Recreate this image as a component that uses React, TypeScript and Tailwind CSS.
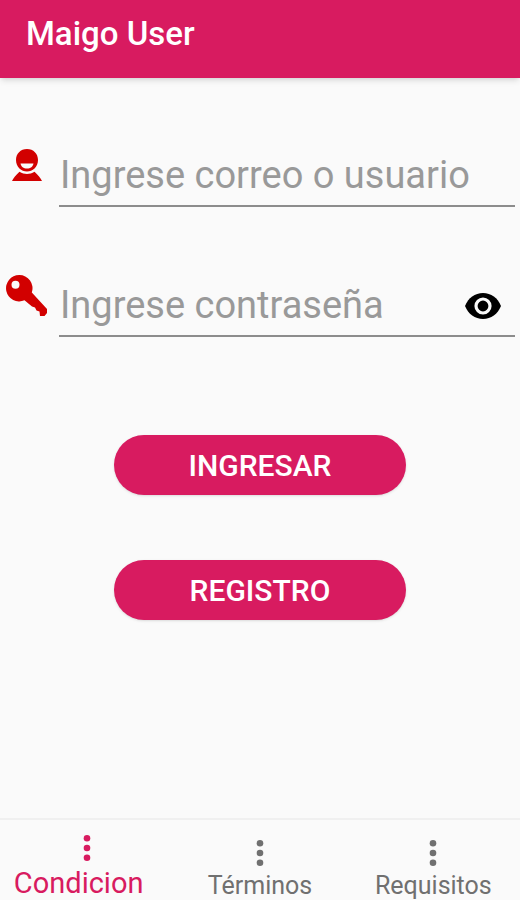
import { useState } from "react";
import clsx from "clsx";

const tabs = ["Condicion", "Términos", "Requisitos"];

function UserIcon() {
    return (
        <svg viewBox="0 0 30 32" className="h-8 w-[30px] fill-[#d20000]" aria-hidden="true">
            <path
                fillRule="evenodd"
                d="M15 0C21.500 0 26 4.700 26 11C26 18 20.500 22.500 15 22.500S4 18 4 11C4 4.700 8.500 0 15 0ZM8.500 14.500C9 17.500 11.500 19.500 15 19.500S21 17.500 21.500 14.500Z"
            />
            <path d="M0 32C1.500 29 3.800 26.200 7.500 22.800C10 24.400 12.400 25 15 25S20 24.400 22.500 22.800C26.200 26.200 28.500 29 30 32Z" />
        </svg>
    );
}

function KeyIcon() {
    return (
        <svg viewBox="0 0 42 42" className="h-[42px] w-[42px] fill-[#d20000]" aria-hidden="true">
            <path
                fillRule="evenodd"
                d="M13.200 0A13.200 13.200 0 0 1 25.800 17.500L41 34V38L38.500 41H34L33.500 36.500L30.500 35.500L29 32.500L26 31.500L18.500 25.300A13.200 13.200 0 1 1 13.200 0ZM9.500 5.700A4 4 0 1 0 9.500 13.700A4 4 0 1 0 9.500 5.700Z"
            />
        </svg>
    );
}

function EyeIcon() {
    return (
        <svg viewBox="0 0 36 26" className="h-[26px] w-9" aria-hidden="true">
            <path d="M0 13C3.200 5 10 0 18 0S32.800 5 36 13C32.800 21 26 26 18 26S3.200 21 0 13Z" />
            <circle cx="18" cy="13" r="7" fill="none" stroke="#fafafa" strokeWidth="3.200" />
        </svg>
    );
}

function DotsIcon() {
    return (
        <svg viewBox="0 0 8 26" className="h-[26px] w-2 fill-current" aria-hidden="true">
            <circle cx="4" cy="3.300" r="3.300" />
            <circle cx="4" cy="13" r="3.300" />
            <circle cx="4" cy="22.700" r="3.300" />
        </svg>
    );
}

const inputClass =
    "h-[62px] w-full border-b-2 border-[#8c8c8c] bg-transparent pl-px text-[38px] text-neutral-800 outline-none placeholder:text-[#999999]";
const buttonClass =
    "h-15 rounded-full bg-[#d81b60] text-[30px] font-medium uppercase text-white shadow-sm";

export default function App() {
    const [active, setActive] = useState(0);
    const [visible, setVisible] = useState(false);

    return (
        <div className="flex min-h-screen flex-col bg-[#fafafa] font-[Roboto,sans-serif]">
            {/* Header */}
            <header className="flex h-[78px] items-start bg-[#d81b60] px-[26px] pt-3.5 shadow-md">
                <h1 className="text-[33px] leading-10 font-medium text-white">Maigo User</h1>
            </header>

            {/* Form */}
            <form className="flex flex-1 flex-col pt-[67px]" onSubmit={e => e.preventDefault()}>
                <div className="flex pr-[5px]">
                    <label htmlFor="usuario" aria-label="Usuario" className="flex w-[59px] shrink-0 justify-center pt-1 pr-[5px]">
                        <UserIcon />
                    </label>
                    <input id="usuario" type="text" placeholder="Ingrese correo o usuario" className={inputClass} />
                </div>

                <div className="mt-[68px] flex pr-[5px]">
                    <label htmlFor="clave" aria-label="Contraseña" className="flex w-[59px] shrink-0 justify-center pr-[5px]">
                        <KeyIcon />
                    </label>
                    <div className="relative flex-1">
                        <input
                            id="clave"
                            type={visible ? "text" : "password"}
                            placeholder="Ingrese contraseña"
                            className={clsx(inputClass, "pr-15")}
                        />
                        <button
                            type="button"
                            aria-label="Mostrar contraseña"
                            className="absolute top-[18px] right-3.5"
                            onClick={() => setVisible(!visible)}
                        >
                            <EyeIcon />
                        </button>
                    </div>
                </div>

                <div className="mt-[98px] flex flex-col gap-[65px] px-[114px]">
                    <button type="submit" className={buttonClass}>Ingresar</button>
                    <button type="button" className={buttonClass}>Registro</button>
                </div>
            </form>

            {/* Bottom tabs */}
            <nav className="grid h-[82px] grid-cols-3 border-t-2 border-[#f0f0f0]">
                {tabs.map((tab, idx) => (
                    <button
                        key={tab}
                        onClick={() => setActive(idx)}
                        className={clsx(
                            "flex flex-col items-center",
                            idx === active ? "gap-2 pt-[15px] text-[29px] text-[#d81b60]" : "gap-1.5 pt-5 text-[25px] text-[#707070]"
                        )}
                    >
                        <DotsIcon />
                        <span className={clsx("leading-7", idx === active && "pr-4")}>{tab}</span>
                    </button>
                ))}
            </nav>
        </div>
    );
}
